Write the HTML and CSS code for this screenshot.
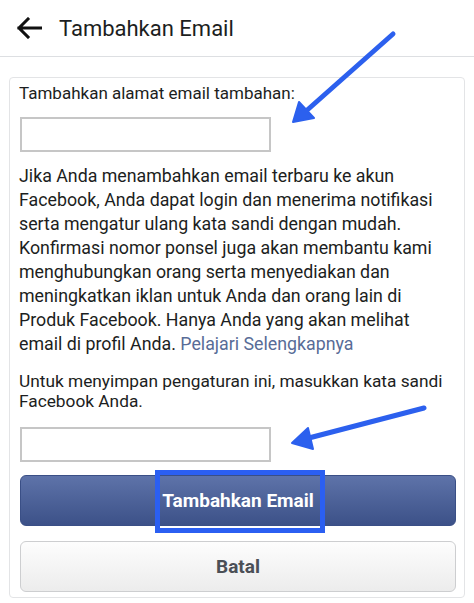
FILE: index.html
```html
<!DOCTYPE html>
<html lang="id">
<head>
    <meta charset="UTF-8">
    <meta name="viewport" content="width=device-width, initial-scale=1.0">
    <title>Tambahkan Email</title>
    <link rel="stylesheet" href="styles.css">
</head>
<body>
    <div class="header">
        <svg class="back" width="26" height="22" viewBox="0 0 26 22">
            <path d="M25 11H3M12 2L3 11l9 9" fill="none" stroke="#111" stroke-width="3" stroke-linecap="square"/>
        </svg>
        <span class="title">Tambahkan Email</span>
    </div>

    <div class="card">
        <div class="label">Tambahkan alamat email tambahan:</div>
        <input type="text" class="field">

        <p class="info">Jika Anda menambahkan email terbaru ke akun Facebook, Anda dapat login dan menerima notifikasi serta mengatur ulang kata sandi dengan mudah. Konfirmasi nomor ponsel juga akan membantu kami menghubungkan orang serta menyediakan dan meningkatkan iklan untuk Anda dan orang lain di Produk Facebook. Hanya Anda yang akan melihat email di profil Anda. <a href="#" class="link">Pelajari Selengkapnya</a></p>

        <div class="note">Untuk menyimpan pengaturan ini, masukkan kata sandi Facebook Anda.</div>
        <input type="password" class="field">

        <button class="btn btn-primary">Tambahkan Email<span class="mark"></span></button>
        <button class="btn btn-cancel">Batal</button>
    </div>

    <!-- annotation arrows -->
    <svg class="arrows" width="474" height="603" viewBox="0 0 474 603">
        <g fill="#2c60ee" stroke="#2c60ee" stroke-linecap="round" stroke-linejoin="round">
            <path d="M393 34L305 112" fill="none" stroke-width="5"/>
            <path d="M293 122L299 102L314 118Z" stroke-width="2"/>
            <path d="M424 408L305 439" fill="none" stroke-width="5"/>
            <path d="M292 443L308 428L313 449Z" stroke-width="2"/>
        </g>
    </svg>
</body>
</html>
```

FILE: styles.css
```css
body {
    margin: 0;
    background: #fff;
    font-family: Roboto, "Noto Sans", sans-serif;
    color: #1c1e21;
    position: relative;
}
.header {
    height: 56px;
    border-bottom: 1px solid #dddfe2;
    display: flex;
    align-items: center;
    padding: 0 16px;
}
.back {
    margin-right: 17px;
}
.title {
    font-size: 22px;
}
.card {
    margin: 20px 9px 0;
    border: 1px solid #e3e4e6;
    border-radius: 4px;
    padding: 3px 9px 5px 9px;
    font-size: 17px;
    line-height: 24px;
}
.field {
    display: block;
    width: 251px;
    height: 35px;
    box-sizing: border-box;
    border: 2px solid #c6c6c6;
    margin: 12px 0 0 1px;
    background: #fff;
}
.info {
    margin: 12px 0 0;
    font-size: 17.8px;
}
.link {
    color: #586c97;
    text-decoration: none;
}
.note {
    margin-top: 15px;
    line-height: 20px;
    font-size: 17.3px;
}
.note + .field {
    margin-top: 16px;
}
.btn {
    display: block;
    width: 436px;
    margin-left: 1px;
    height: 51px;
    border-radius: 6px;
    font-family: Roboto, "Noto Sans", sans-serif;
    font-size: 19px;
    font-weight: bold;
    cursor: pointer;
}
.btn-primary {
    position: relative;
    margin-top: 13px;
    border: 1px solid #3a4f86;
    background: linear-gradient(#5e73a9, #3c5188);
    color: #fff;
}
.btn-cancel {
    margin-top: 15px;
    border: 1px solid #cdced0;
    background: linear-gradient(#fdfdfd, #ececec);
    color: #4b4f56;
}
.mark {
    position: absolute;
    left: 134px;
    top: -6px;
    width: 160px;
    height: 53px;
    border: 5px solid #2b5ff2;
}
.arrows {
    position: absolute;
    left: 0;
    top: 0;
    pointer-events: none;
}
```
